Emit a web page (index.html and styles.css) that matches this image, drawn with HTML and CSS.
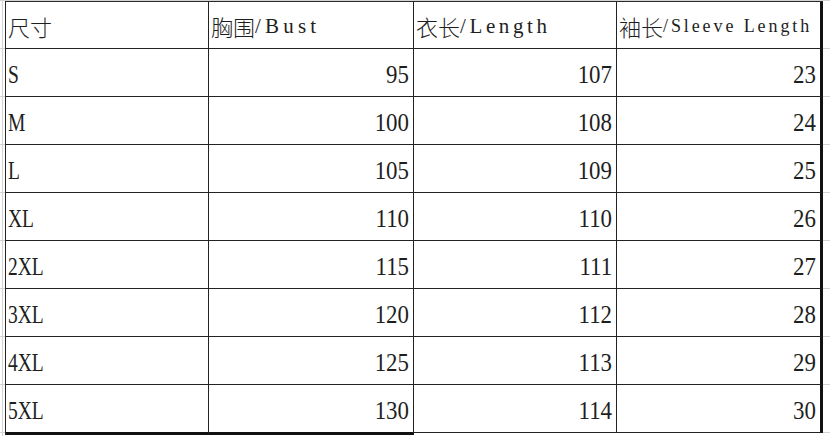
FILE: index.html
```html
<!DOCTYPE html>
<html lang="zh">
<head>
<meta charset="utf-8">
<title>尺码表</title>
<link rel="stylesheet" href="styles.css">
</head>
<body>
<div class="sheet">
  <div class="grid">
    <div class="c h">尺寸</div>
    <div class="c h">胸围<span class="en bust">/Bust</span></div>
    <div class="c h">衣长<span class="en len">/Length</span></div>
    <div class="c h last">袖长<span class="en sm">/Sleeve Length</span></div>

    <div class="c"><span class="l">S</span></div>
    <div class="c num"><span class="n">95</span></div>
    <div class="c num"><span class="n">107</span></div>
    <div class="c num last"><span class="n">23</span></div>

    <div class="c"><span class="l">M</span></div>
    <div class="c num"><span class="n">100</span></div>
    <div class="c num"><span class="n">108</span></div>
    <div class="c num last"><span class="n">24</span></div>

    <div class="c"><span class="l">L</span></div>
    <div class="c num"><span class="n">105</span></div>
    <div class="c num"><span class="n">109</span></div>
    <div class="c num last"><span class="n">25</span></div>

    <div class="c"><span class="l">XL</span></div>
    <div class="c num"><span class="n">110</span></div>
    <div class="c num"><span class="n">110</span></div>
    <div class="c num last"><span class="n">26</span></div>

    <div class="c"><span class="l">2XL</span></div>
    <div class="c num"><span class="n">115</span></div>
    <div class="c num"><span class="n">111</span></div>
    <div class="c num last"><span class="n">27</span></div>

    <div class="c"><span class="l">3XL</span></div>
    <div class="c num"><span class="n">120</span></div>
    <div class="c num"><span class="n">112</span></div>
    <div class="c num last"><span class="n">28</span></div>

    <div class="c"><span class="l">4XL</span></div>
    <div class="c num"><span class="n">125</span></div>
    <div class="c num"><span class="n">113</span></div>
    <div class="c num last"><span class="n">29</span></div>

    <div class="c thick"><span class="l">5XL</span></div>
    <div class="c num thick"><span class="n">130</span></div>
    <div class="c num thin"><span class="n">114</span></div>
    <div class="c num last thin"><span class="n">30</span></div>
  </div>
</div>
</body>
</html>
```

FILE: styles.css
```css
html, body {
  margin: 0;
  height: 100%;
}

body {
  background-color: #fff;
  background-image: repeating-linear-gradient(to bottom, #d4d4d4 0 1px, transparent 1px 48px);
  color: #1e1e1e;
  font-family: "Liberation Serif", "Noto Sans CJK SC", serif;
}

.sheet {
  box-sizing: border-box;
  height: 100%;
  margin-left: 2px;
  padding: 1px 0 0 2px;
  border-left: 1px solid #d4d4d4;
}

.grid {
  display: grid;
  grid-template-columns: 203px 205px 203px 206px;
  grid-template-rows: 47px repeat(7, 48px) 50px;
  width: max-content;
  border-top: 1px solid #2a2a2a;
  border-left: 1px solid #222;
  background: #fff;
}

.c {
  box-sizing: border-box;
  display: flex;
  align-items: flex-end;
  padding: 0 4px 9px 2px;
  border-right: 1px solid #222;
  border-bottom: 1px solid #222;
  line-height: 24px;
  white-space: nowrap;
  overflow: visible;
}

.h {
  font-family: "Noto Sans CJK SC", sans-serif;
  font-weight: 300;
  font-size: 22px;
  padding-left: 2px;
  padding-bottom: 10px;
}

.en {
  font-family: "Liberation Serif", serif;
  font-weight: 400;
  font-size: 21px;
  letter-spacing: 4.2px;
}

.en.len {
  letter-spacing: 3.6px;
}

.en.sm {
  font-size: 18px;
  letter-spacing: 2.9px;
}

.num {
  justify-content: flex-end;
}

.last {
  border-right: 3px solid #111;
}

.thick {
  border-bottom: 3px solid #111;
}

.thin {
  height: 48px;
  align-self: start;
}

.n, .l {
  display: inline-block;
  font-family: "Liberation Serif", serif;
  font-size: 26px;
}

.n {
  transform: scaleX(0.88);
  transform-origin: right bottom;
}

.l {
  transform: scaleX(0.75);
  transform-origin: left bottom;
}
```
